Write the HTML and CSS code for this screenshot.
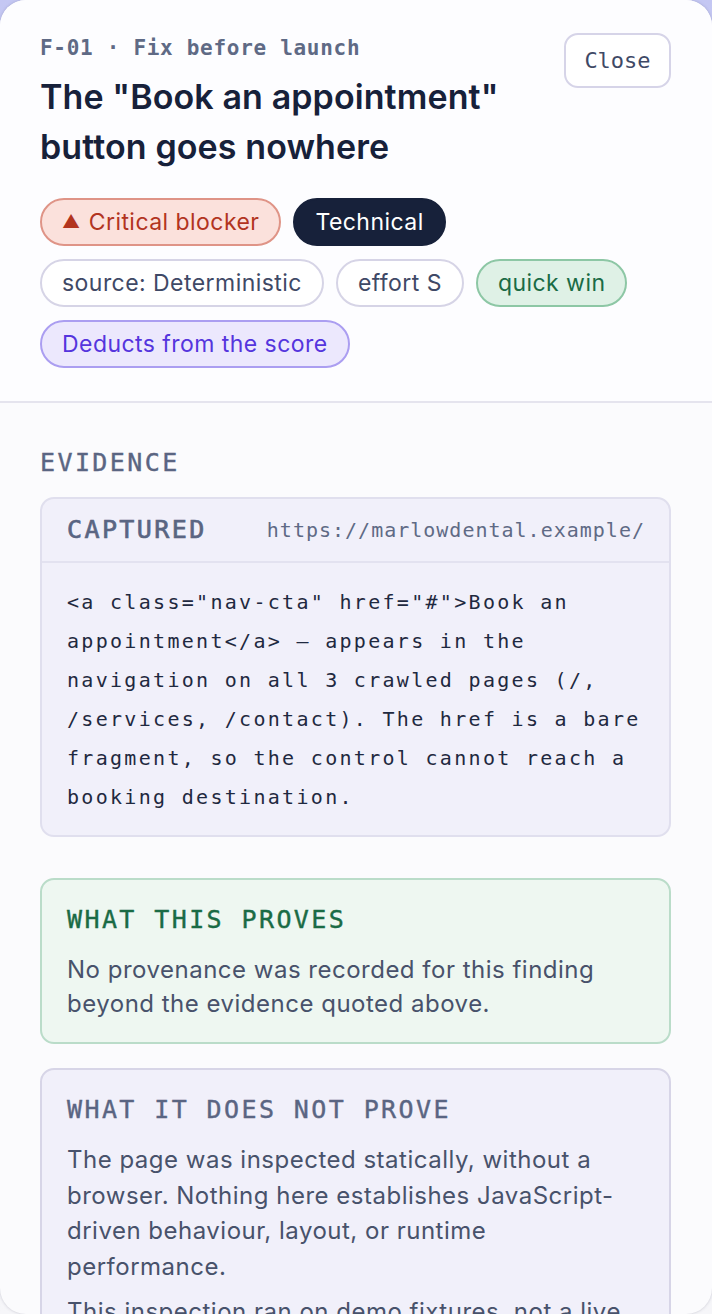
FILE: index.html
```html
<!DOCTYPE html>
<html lang="en">
<head>
<meta charset="utf-8">
<title>F-01 · Fix before launch</title>
<link rel="stylesheet" href="styles.css">
</head>
<body>
<div class="sheet">
  <header class="head">
    <div class="head-main">
      <div class="meta">F-01 · Fix before launch</div>
      <h1 class="title">The "Book an appointment" button goes nowhere</h1>
      <div class="pills">
        <span class="pill pill-critical"><span class="tri">▲</span> Critical blocker</span>
        <span class="pill pill-dark">Technical</span>
        <span class="pill pill-plain">source: Deterministic</span>
        <span class="pill pill-plain">effort S</span>
        <span class="pill pill-green">quick win</span>
        <span class="pill pill-violet">Deducts from the score</span>
      </div>
    </div>
    <button class="close" type="button">Close</button>
  </header>
  <main class="body">
    <h2 class="label">EVIDENCE</h2>
    <section class="card card-evidence">
      <div class="card-head">
        <span class="card-label label-strong">CAPTURED</span>
        <span class="url">https://marlowdental.example/</span>
      </div>
      <p class="code">&lt;a class="nav-cta" href="#"&gt;Book an appointment&lt;/a&gt; — appears in the navigation on all 3 crawled pages (/, /services, /contact). The href is a bare fragment, so the control cannot reach a booking destination.</p>
    </section>
    <section class="card card-green">
      <h3 class="card-label label-green">WHAT THIS PROVES</h3>
      <p class="text">No provenance was recorded for this finding beyond the evidence quoted above.</p>
    </section>
    <section class="card card-gray">
      <h3 class="card-label">WHAT IT DOES NOT PROVE</h3>
      <p class="text">The page was inspected statically, without a browser. Nothing here establishes JavaScript-driven behaviour, layout, or runtime performance.</p>
      <p class="text">This inspection ran on demo fixtures, not a live crawl of the site.</p>
    </section>
  </main>
</div>
</body>
</html>
```
FILE: styles.css
```css
* { box-sizing: border-box; }
html, body { margin: 0; padding: 0; }
body {
  width: 712px;
  height: 1314px;
  overflow: hidden;
  background: linear-gradient(180deg, #c4c7f3 0%, #e2e2f4 45%, #f6f6f9 100%);
}
.sheet {
  width: 712px;
  height: 1314px;
  border-radius: 26px;
  overflow: hidden;
  background: #fbfbfd;
  box-shadow: 0 0 3px rgba(60, 60, 90, 0.25);
  font-family: "Inter", "Noto Sans", sans-serif;
}
.head {
  display: flex;
  justify-content: space-between;
  align-items: flex-start;
  padding: 33px 41px 33px 40px;
  background: #fdfdff;
  border-bottom: 2px solid #e5e4ee;
}
.head-main { flex: 1; min-width: 0; }
.meta {
  font-family: "DejaVu Sans Mono", monospace;
  font-weight: bold;
  font-size: 21px;
  letter-spacing: 0.7px;
  line-height: 30px;
  color: #5f6a85;
}
.title {
  margin: 9px 0 0;
  font-size: 34px;
  font-weight: 600;
  line-height: 50px;
  color: #17213a;
  letter-spacing: 0.1px;
  max-width: 520px;
}
.pills {
  display: flex;
  flex-wrap: wrap;
  gap: 13px 12px;
  margin-top: 26px;
  width: 630px;
}
.pill {
  display: inline-flex;
  align-items: center;
  height: 48px;
  padding: 0 20px;
  border-radius: 999px;
  border: 2px solid #d6d4e6;
  font-size: 23px;
  letter-spacing: 0.45px;
  line-height: 1;
  white-space: nowrap;
}
.tri { font-size: 18px; margin-right: 8px; }
.pill-critical { background: #fbe1dc; border-color: #df9487; color: #b2341f; }
.pill-dark { background: #17213a; border-color: #17213a; color: #ffffff; }
.pill-plain { background: #ffffff; color: #3f4966; }
.pill-green { background: #dff1e6; border-color: #8dc7a5; color: #1a6b45; }
.pill-violet { background: #ece8fd; border-color: #ab9ef1; color: #5535dd; }
.close {
  flex: none;
  width: 107px;
  height: 55px;
  border: 2px solid #d6d4e8;
  border-radius: 14px;
  background: #ffffff;
  font-family: "DejaVu Sans Mono", monospace;
  font-size: 22px;
  color: #3f4966;
  padding: 0;
}
.body {
  padding: 45px 41px 0 40px;
}
.label {
  margin: 0 0 19px;
  font-family: "DejaVu Sans Mono", monospace;
  font-weight: normal;
  font-size: 25px;
  letter-spacing: 2.4px;
  line-height: 30px;
  color: #5a6582;
  -webkit-text-stroke: 0.4px #5a6582;
}
.card {
  border: 2px solid #e0dfee;
  border-radius: 14px;
  background: #f1f0fa;
}
.card-evidence { margin-bottom: 41px; }
.card-head {
  display: flex;
  justify-content: space-between;
  align-items: center;
  height: 64px;
  padding: 0 24px 0 25px;
  border-bottom: 2px solid #e3e2f0;
}
.card-label {
  margin: 0;
  font-family: "DejaVu Sans Mono", monospace;
  font-weight: normal;
  font-size: 25px;
  letter-spacing: 2.4px;
  line-height: 30px;
  color: #5a6582;
  -webkit-text-stroke: 0.4px #5a6582;
}
.label-strong { -webkit-text-stroke: 0.7px #5a6582; }
.url {
  font-family: "DejaVu Sans Mono", monospace;
  font-size: 20px;
  letter-spacing: 1px;
  color: #5f6a85;
}
.code {
  margin: 0;
  padding: 20px 24px 18px 25px;
  font-family: "DejaVu Sans Mono", monospace;
  font-size: 20px;
  letter-spacing: 2.3px;
  line-height: 39px;
  color: #1f2940;
}
.card-green {
  background: #eef7f1;
  border-color: #badcc9;
  padding: 25px 25px 21px;
  margin-bottom: 24px;
}
.label-green { color: #1a6b45; -webkit-text-stroke: 0.4px #1a6b45; }
.card-gray {
  border-color: #d7d5e7;
  padding: 25px 25px 25px;
}
.text {
  margin: 18px 0 0;
  font-size: 24px;
  letter-spacing: 0.5px;
  line-height: 34px;
  color: #48526b;
}
.card-gray .text { line-height: 35.5px; margin-top: 17px; }
.card-gray .text + .text { margin-top: 10px; }
```
